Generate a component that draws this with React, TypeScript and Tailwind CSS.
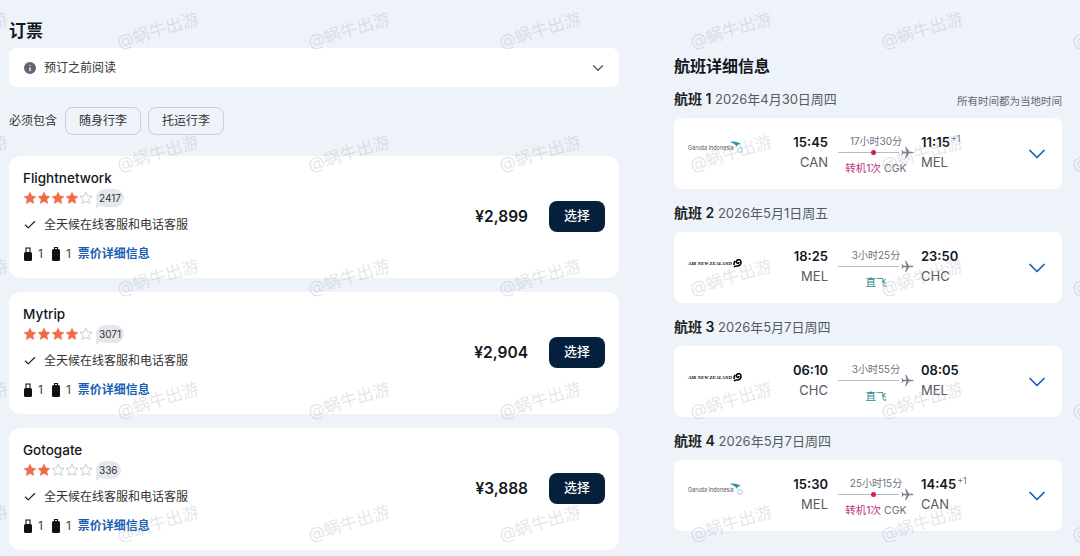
import { ChevronDown, Check, Info } from "lucide-react";

const FONT = "font-['Inter','Noto_Sans_CJK_SC',sans-serif]";

const OFFERS = [
  { name: "Flightnetwork", stars: 4, count: "2417", price: "¥2,899" },
  { name: "Mytrip", stars: 4, count: "3071", price: "¥2,904" },
  { name: "Gotogate", stars: 2, count: "336", price: "¥3,888" },
];

const FLIGHTS = [
  { no: "航班 1", date: "2026年4月30日周四", airline: "garuda", dep: "15:45", from: "CAN", dur: "17小时30分", arr: "11:15", plus: true, to: "MEL", stop: true },
  { no: "航班 2", date: "2026年5月1日周五", airline: "anz", dep: "18:25", from: "MEL", dur: "3小时25分", arr: "23:50", plus: false, to: "CHC", stop: false },
  { no: "航班 3", date: "2026年5月7日周四", airline: "anz", dep: "06:10", from: "CHC", dur: "3小时55分", arr: "08:05", plus: false, to: "MEL", stop: false },
  { no: "航班 4", date: "2026年5月7日周四", airline: "garuda", dep: "15:30", from: "MEL", dur: "25小时15分", arr: "14:45", plus: true, to: "CAN", stop: true },
];

const Star = ({ on }: { on: boolean }) => (
  <svg width="14" height="14" viewBox="0 0 24 24" fill={on ? "#ef6a45" : "none"} stroke={on ? "#ef6a45" : "#c4c7cc"} strokeWidth={on ? 1 : 1.6}>
    <path d="M12 2l3 6.6 7.2.8-5.4 4.8 1.5 7.1L12 17.7l-6.3 3.6 1.5-7.1L1.8 9.4 9 8.6z" />
  </svg>
);

const Bag = ({ big }: { big?: boolean }) => (
  <svg width="10" height="15" viewBox="0 0 10 15" fill="#111">
    <path d={big ? "M3.5 2V.5h3V2" : "M3 5V1h4v4"} fill="none" stroke="#111" strokeWidth="1.1" />
    <rect x="1" y={big ? 2 : 5} width="8" height={big ? 12 : 9} rx="1.6" />
  </svg>
);

const PlaneIcon = () => (
  <svg width="13" height="13" viewBox="0 0 24 24" fill="#7a808a" className="ml-[2px] shrink-0">
    <path d="M23 12c0-.9-1-1.3-2.2-1.3h-5.9L9.3 1.5H7.600l2.600 9.200H4.400L2.400 8H1l1 4-1 4h1.400l2-2.700h5.800l-2.600 9.200h1.700l5.600-9.200h5.900C22 13.300 23 12.900 23 12z" />
  </svg>
);

function Logo({ kind }: { kind: string }) {
  if (kind === "garuda") {
    return (
      <div className="flex w-[52px] items-center pb-[10px]">
        <span className="text-[5.5px] leading-none whitespace-nowrap text-[#555]">Garuda Indonesia</span>
        <svg width="14" height="12" viewBox="0 0 14 12" className="-mt-[4px] -ml-[4px] shrink-0">
          <path d="M0 1c4-1 8 0 11 2-3 0-4 1-4 3C5 3 3 2 0 1z" fill="#2b8fb0" />
          <circle cx="10" cy="9" r="2.400" fill="none" stroke="#9fb9cf" strokeWidth="0.8" />
        </svg>
      </div>
    );
  }
  return (
    <div className="flex w-[52px] items-center pb-[6px]">
      <span className="font-['Liberation_Serif',serif] text-[4.8px] leading-none font-bold whitespace-nowrap text-black italic">AIR NEW ZEALAND</span>
      <svg width="9" height="9" viewBox="0 0 9 9" className="-mt-[3px] ml-[1px] shrink-0">
        <path d="M1 8c1-1 2-1 3-1 3 0 4-2 4-4S6 0 4.500 1 3 3 4 4 6 4 6 3M1 6c0-2 0-3 1-4" fill="none" stroke="#000" strokeWidth="1.600" />
      </svg>
    </div>
  );
}

function OfferCard({ offer }: { offer: (typeof OFFERS)[number] }) {
  return (
    <div className="flex h-[122px] items-center justify-between rounded-xl bg-white px-[14px]">
      <div className="flex h-full flex-col pt-[14px]">
        <div className="text-[13.5px] leading-[16px] font-medium text-[#14171c]">{offer.name}</div>
        <div className="mt-[3px] flex h-[17px] items-center">
          <div className="flex">
            {[0, 1, 2, 3, 4].map((i) => <Star key={i} on={i < offer.stars} />)}
          </div>
          <span className="relative ml-[3px] rounded-[9px] bg-[#e4e7ec] px-[3px] text-[10px] leading-[18px] text-[#333]">
            {offer.count}
            <span className="absolute top-[14px] left-0 h-0 w-0 border-t-[6px] border-r-[7px] border-t-[#e4e7ec] border-r-transparent" />
          </span>
        </div>
        <div className="mt-[10px] flex items-center gap-[7px] text-[12px] leading-[18px] text-[#333]">
          <Check size={14} strokeWidth={2} className="text-[#1c1f24]" />
          全天候在线客服和电话客服
        </div>
        <div className="mt-[11px] flex items-center text-[12px] leading-[18px] text-[#444]">
          <Bag /><span className="ml-[5px]">1</span>
          <span className="ml-[8px]"><Bag big /></span><span className="ml-[5px]">1</span>
          <span className="ml-[7px] font-semibold text-[#1a5fb4]">票价详细信息</span>
        </div>
      </div>
      <div className="flex items-center gap-[21px]">
        <span className="text-[15.5px] font-semibold text-[#14171c]">{offer.price}</span>
        <button className="-mt-[2px] h-[31px] w-[56px] rounded-lg bg-[#05203c] text-[13px] font-medium text-white">选择</button>
      </div>
    </div>
  );
}

function FlightRow({ f, first }: { f: (typeof FLIGHTS)[number]; first: boolean }) {
  return (
    <div>
      <div className="flex h-[28px] items-center justify-between">
        <div className="text-[13px] text-[#555b63]">
          <span className="text-[14px] font-semibold text-[#1c1f24]">{f.no}</span> {f.date}
        </div>
        {first && <span className="mt-[6px] text-[10.5px] text-[#626971]">所有时间都为当地时间</span>}
      </div>
      <div className="mt-[5px] flex h-[71px] items-center rounded-lg bg-white pl-[14px]">
        <Logo kind={f.airline} />
        <div className="ml-[28px] w-[60px] pb-[4px] text-right">
          <div className="text-[13px] leading-[20px] font-semibold text-[#14171c]">{f.dep}</div>
          <div className="text-[13px] leading-[20px] text-[#555b63]">{f.from}</div>
        </div>
        <div className="ml-[10px] flex w-[76px] flex-col items-center">
          <div className="mt-[2px] text-[10px] leading-[14px] text-[#6b7280]">{f.dur}</div>
          <div className="flex h-[10px] w-full items-center">
            <div className="relative h-px flex-1 bg-[#b6bbc2]">
              {f.stop && <span className="absolute -top-[2px] left-[33px] h-[5px] w-[5px] rounded-full bg-[#d6165f]" />}
            </div>
            <PlaneIcon />
          </div>
          {f.stop ? (
            <div className="mt-[3px] text-[10.5px] leading-[15px] whitespace-nowrap text-[#c2307a]">
              转机1次 <span className="text-[#6b7280]">CGK</span>
            </div>
          ) : (
            <div className="mt-[3px] text-[10.5px] leading-[15px] text-[#1f8a8a]">直飞</div>
          )}
        </div>
        <div className="ml-[7px] w-[60px] pb-[4px]">
          <div className="text-[13px] leading-[20px] font-semibold text-[#14171c]">
            {f.arr}
            {f.plus && <sup className="ml-px text-[9px] font-normal text-[#6b7280]">+1</sup>}
          </div>
          <div className="text-[13px] leading-[20px] text-[#555b63]">{f.to}</div>
        </div>
        <ChevronDown size={28} strokeWidth={1.5} className="mr-[11px] ml-auto text-[#1a5fb4]" />
      </div>
    </div>
  );
}

const WM_X = [-74, 117, 308, 499, 690, 881, 1072];
const WM_Y = [30, 153, 277, 400, 523];

export default function App() {
  return (
    <div className={"relative flex h-[556px] w-[1080px] overflow-hidden bg-[#eef3fa] " + FONT}>
      <div className="ml-[9px] w-[610px]">
        <h1 className="pt-[20px] text-[17px] leading-[22px] font-semibold text-[#14171c]">订票</h1>
        <div className="mt-[6px] flex h-[39px] items-center justify-between rounded-lg bg-white pr-[12px] pl-[13px]">
          <div className="flex items-center gap-[6px] text-[12px] text-[#333]">
            <Info size={16} fill="#5f6670" stroke="#fff" strokeWidth={2} />
            预订之前阅读
          </div>
          <ChevronDown size={18} strokeWidth={1.6} className="text-[#555]" />
        </div>
        <div className="mt-[20px] flex items-center text-[12px] text-[#333]">
          必须包含
          <span className="ml-[8px] flex h-[28px] w-[76px] items-center justify-center rounded-lg border border-[#c8ced6]">随身行李</span>
          <span className="ml-[7px] flex h-[28px] w-[76px] items-center justify-center rounded-lg border border-[#c8ced6]">托运行李</span>
        </div>
        <div className="mt-[21px] flex flex-col gap-[14px]">
          {OFFERS.map((o) => <OfferCard key={o.name} offer={o} />)}
        </div>
      </div>

      <div className="ml-[55px] w-[388px]">
        <h2 className="pt-[54px] text-[16px] leading-[24px] font-semibold text-[#14171c]">航班详细信息</h2>
        <div className="mt-[7px] flex flex-col gap-[10px]">
          {FLIGHTS.map((f, i) => <FlightRow key={f.no} f={f} first={i === 0} />)}
        </div>
      </div>

      {WM_Y.flatMap((y) =>
        WM_X.map((x) => (
          <span
            key={x + "-" + y}
            className="pointer-events-none absolute -translate-x-1/2 -translate-y-1/2 -rotate-[17deg] text-[17px] whitespace-nowrap text-[#8f98a6]/25"
            style={{ left: x + 41, top: y + 1 }}
          >
            @蜗牛出游
          </span>
        ))
      )}
    </div>
  );
}
